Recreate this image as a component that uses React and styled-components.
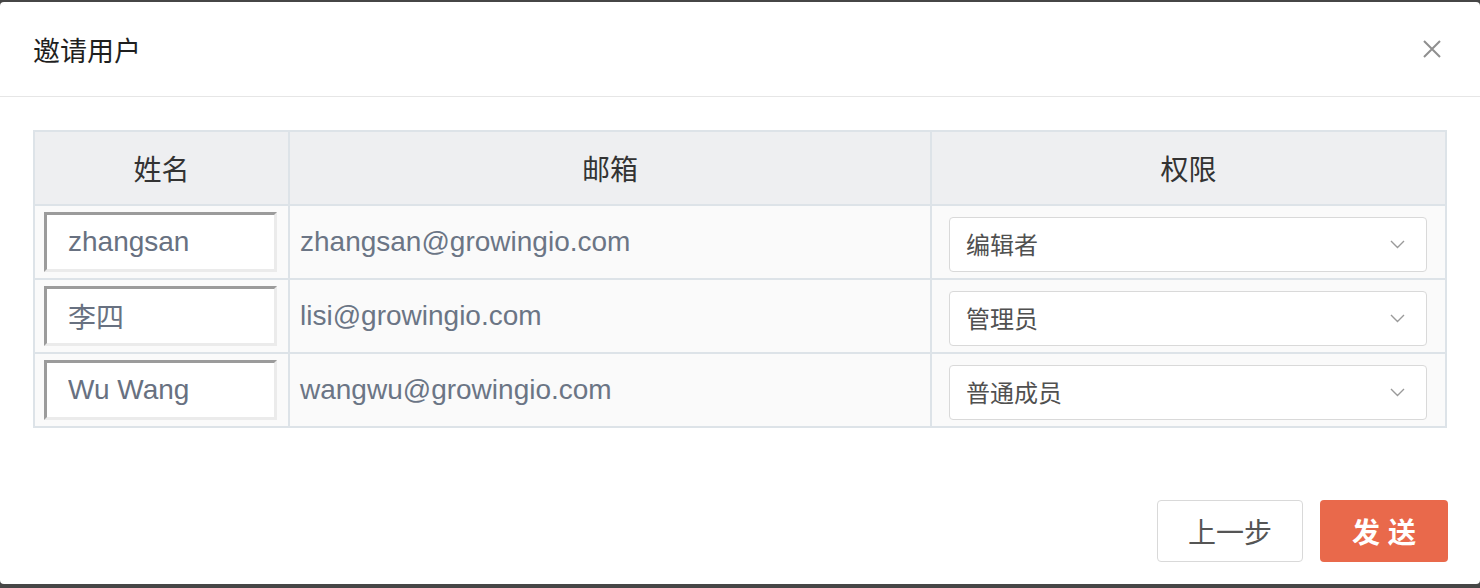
import React from "react";
import styled, { createGlobalStyle } from "styled-components";

const GlobalStyle = createGlobalStyle`
  html, body {
    margin: 0;
    padding: 0;
    background: #464646;
    font-family: "Liberation Sans", "Noto Sans CJK SC", sans-serif;
  }
  * { box-sizing: border-box; }
`;

const users = [
  { name: "zhangsan", email: "zhangsan@growingio.com", role: "编辑者" },
  { name: "李四", email: "lisi@growingio.com", role: "管理员" },
  { name: "Wu Wang", email: "wangwu@growingio.com", role: "普通成员" },
];

const App = () => {
  return (
    <>
      <GlobalStyle />
      <Page>
        <Modal>
          <Header>
            <Title>邀请用户</Title>
            <CloseButton aria-label="close">
              <svg width="18" height="18" viewBox="0 0 18 18">
                <path d="M1 1 L17 17 M17 1 L1 17" stroke="#8f8f8f" strokeWidth="2" fill="none" />
              </svg>
            </CloseButton>
          </Header>

          <Body>
            <Table>
              <HeadCell>姓名</HeadCell>
              <HeadCell>邮箱</HeadCell>
              <HeadCell>权限</HeadCell>
              {users.map((u) => (
                <React.Fragment key={u.email}>
                  <Cell>
                    <NameInput defaultValue={u.name} />
                  </Cell>
                  <Cell>
                    <Email>{u.email}</Email>
                  </Cell>
                  <Cell $select>
                    <Select>
                      <span>{u.role}</span>
                      <svg width="15" height="9" viewBox="0 0 15 9">
                        <path d="M1 1 L7.5 7.5 L14 1" stroke="#9a9a9a" strokeWidth="1.4" fill="none" />
                      </svg>
                    </Select>
                  </Cell>
                </React.Fragment>
              ))}
            </Table>
          </Body>

          <Footer>
            <Button>上一步</Button>
            <Button $primary>发 送</Button>
          </Footer>
        </Modal>
      </Page>
    </>
  );
};

const Page = styled.div`
  width: 1480px;
  height: 588px;
  padding: 2px 0 4px;
`;

const Modal = styled.div`
  height: 582px;
  background: #fff;
  border-radius: 4px;
  display: flex;
  flex-direction: column;
`;

const Header = styled.div`
  height: 95px;
  border-bottom: 1px solid #e6e6e6;
  display: flex;
  align-items: center;
  justify-content: space-between;
  padding: 0 39px 0 33px;
`;

const Title = styled.h1`
  margin: 0;
  font-size: 27px;
  font-weight: 400;
  color: #1f1f1f;
`;

const CloseButton = styled.button`
  border: 0;
  background: none;
  padding: 0;
  width: 18px;
  height: 18px;
  display: flex;
  cursor: pointer;
`;

const Body = styled.div`
  padding: 33px 33px 0;
`;

const Table = styled.div`
  display: grid;
  grid-template-columns: 253px 640px 513px;
  grid-template-rows: repeat(4, 72px);
  gap: 2px;
  padding: 2px;
  background: #dde3e8;
  width: 1414px;
`;

const HeadCell = styled.div`
  background: #eeeff1;
  display: flex;
  align-items: center;
  justify-content: center;
  font-size: 28px;
  color: #333;
`;

const Cell = styled.div`
  background: #fafafa;
  display: flex;
  align-items: center;
  padding: ${(p) => (p.$select ? "5px 18px 0 17px" : "0 0 0 9px")};
`;

const NameInput = styled.input`
  width: 233px;
  height: 60px;
  border-style: solid;
  border-width: 3px;
  border-color: #9b9b9b #ebebeb #ebebeb #9b9b9b;
  background: #fff;
  padding: 0 0 0 21px;
  font-family: "Liberation Sans", "Noto Sans CJK SC", sans-serif;
  font-size: 28px;
  color: #687181;
  outline: none;
`;

const Email = styled.span`
  padding-left: 1px;
  font-size: 28px;
  color: #6b7585;
`;

const Select = styled.div`
  width: 100%;
  height: 55px;
  border: 1.5px solid #d9d9d9;
  border-radius: 4px;
  background: #fff;
  display: flex;
  align-items: center;
  justify-content: space-between;
  padding: 0 21px 3px 16px;
  font-size: 24px;
  color: #505050;

  svg {
    margin-top: 3px;
  }
`;

const Footer = styled.div`
  margin-top: auto;
  display: flex;
  justify-content: flex-end;
  gap: 17px;
  padding: 0 32px 22px;
`;

const Button = styled.button`
  height: 62px;
  width: ${(p) => (p.$primary ? "128px" : "146px")};
  border-radius: 4px;
  border: ${(p) => (p.$primary ? "0" : "1.5px solid #d9d9d9")};
  background: ${(p) => (p.$primary ? "#e9694b" : "#fff")};
  color: ${(p) => (p.$primary ? "#fff" : "#555")};
  font-family: "Liberation Sans", "Noto Sans CJK SC", sans-serif;
  font-size: 28px;
  font-weight: ${(p) => (p.$primary ? "700" : "400")};
  cursor: pointer;
`;

export default App;
